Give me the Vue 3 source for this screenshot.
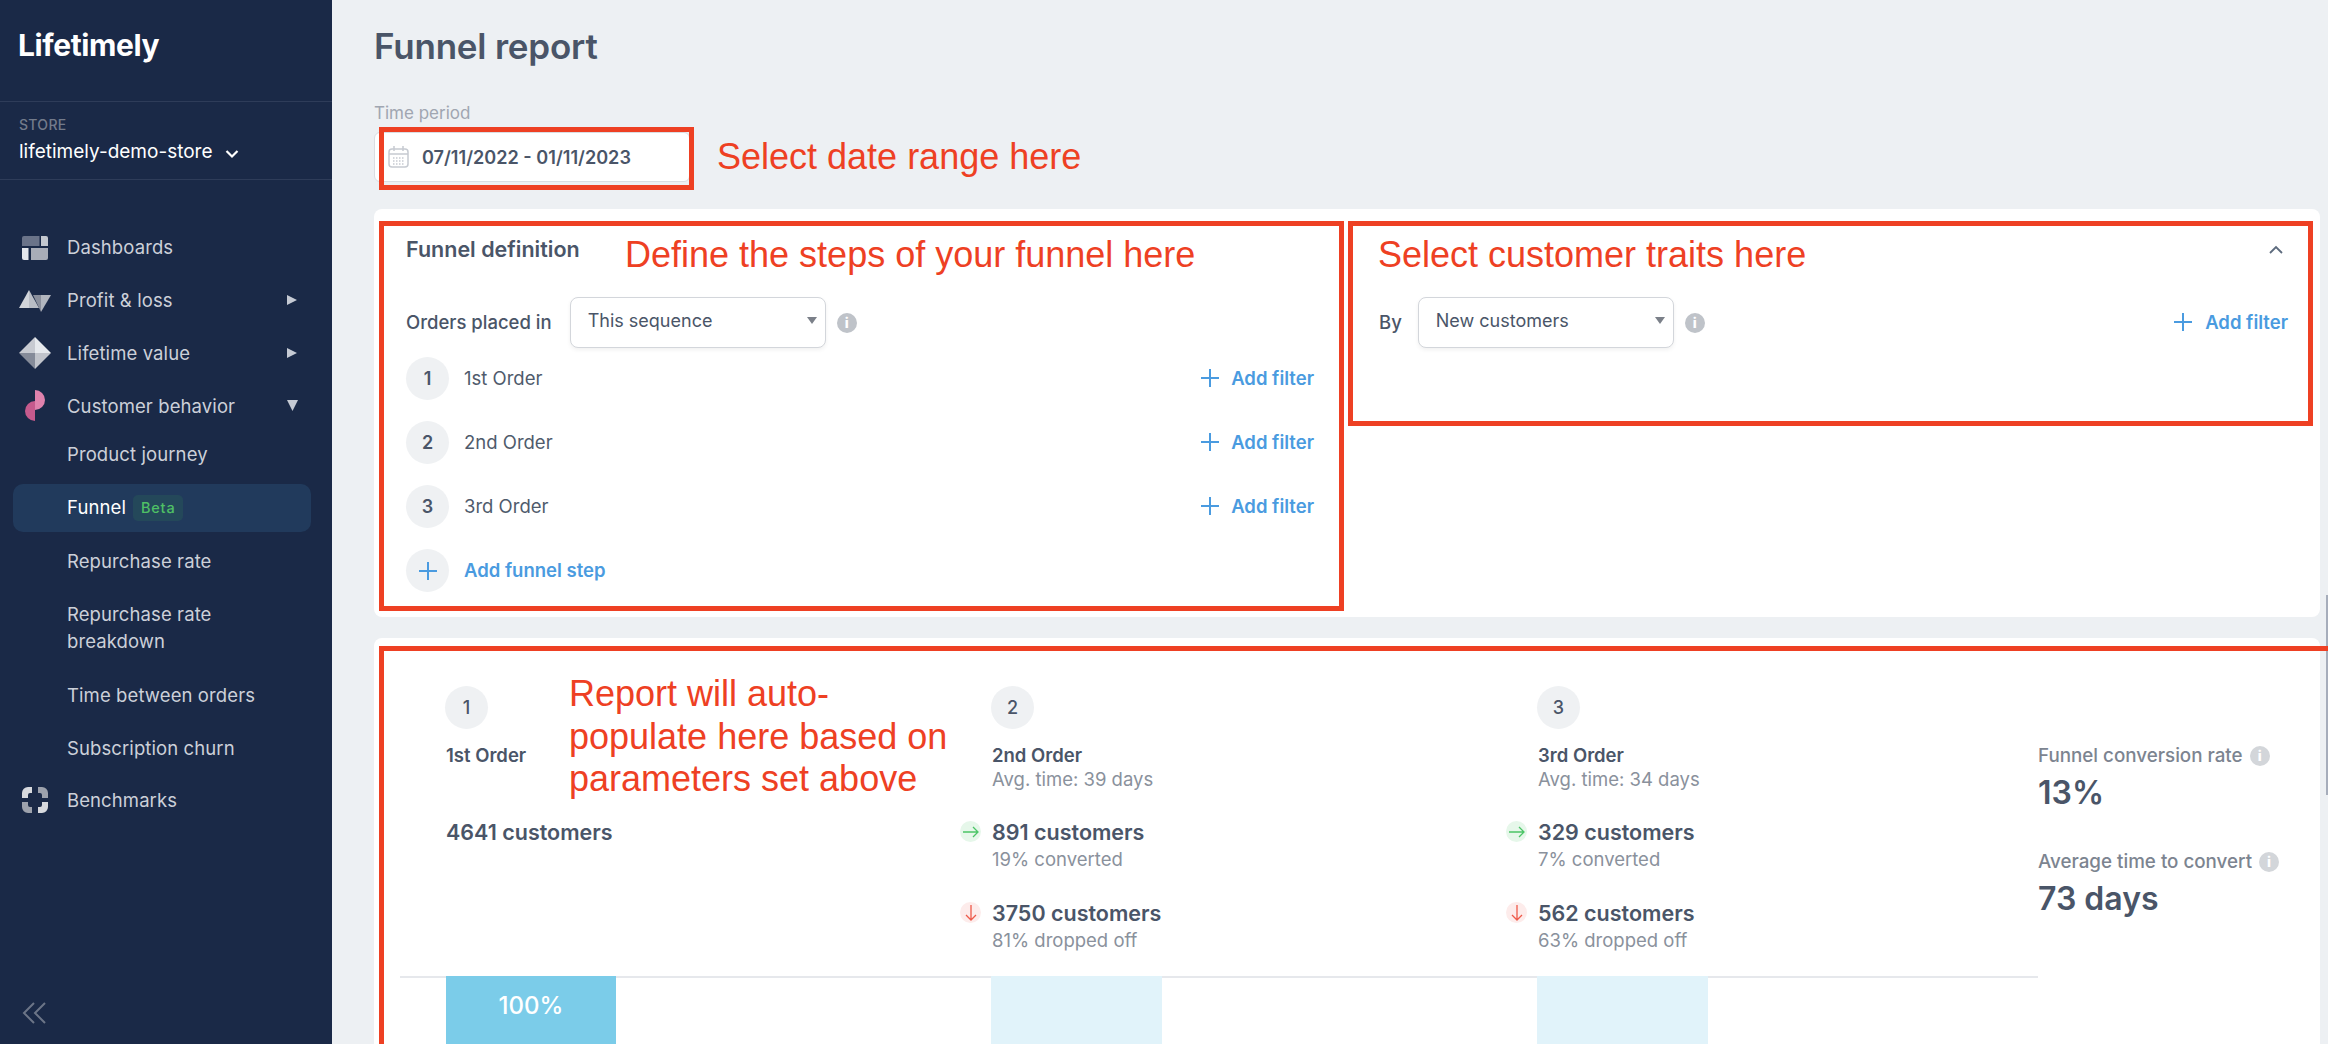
<script setup>
const navTop = [
  { label: 'Dashboards', icon: 'dash' },
  { label: 'Profit & loss', icon: 'profit', caret: 'right' },
  { label: 'Lifetime value', icon: 'ltv', caret: 'right' },
  { label: 'Customer behavior', icon: 'cust', caret: 'down' }
]
const navSub = [
  { label: 'Product journey' },
  { label: 'Funnel', active: true },
  { label: 'Repurchase rate' },
  { label: 'Repurchase rate breakdown' },
  { label: 'Time between orders' },
  { label: 'Subscription churn' }
]
const steps = [
  { n: 1, label: '1st Order' },
  { n: 2, label: '2nd Order' },
  { n: 3, label: '3rd Order' }
]
const report = [
  { n: 1, label: '1st Order', customers: '4641 customers', fill: true, text: '100%' },
  {
    n: 2, label: '2nd Order', avg: 'Avg. time: 39 days',
    conv: '891 customers', convSub: '19% converted',
    drop: '3750 customers', dropSub: '81% dropped off'
  },
  {
    n: 3, label: '3rd Order', avg: 'Avg. time: 34 days',
    conv: '329 customers', convSub: '7% converted',
    drop: '562 customers', dropSub: '63% dropped off', narrow: true
  }
]
</script>

<template>
  <div class="app">
    <aside class="side">
      <div class="logo">Lifetimely</div>
      <div class="store">
        <div class="store-label">STORE</div>
        <div class="store-name">
          lifetimely-demo-store
          <svg width="14" height="10" viewBox="0 0 14 10"><path d="M1.5 2l5.5 5.5L12.5 2" fill="none" stroke="#fff" stroke-width="2.2"/></svg>
        </div>
      </div>
      <nav class="nav">
        <div v-for="item in navTop" :key="item.label" class="nav-main">
          <span class="nav-icon">
            <svg v-if="item.icon === 'dash'" width="32" height="32" viewBox="0 0 32 32">
              <path d="M3 7a2 2 0 0 1 2-2h15.500v10H3z" fill="#6a7389"/>
              <path d="M22 5h5a2 2 0 0 1 2 2v8h-7z" fill="#c3c7cf"/>
              <path d="M3 17h6.500v12H5a2 2 0 0 1-2-2z" fill="#e4e7ec"/>
              <path d="M12 17h17v10a2 2 0 0 1-2 2H12z" fill="#a9adb8"/>
            </svg>
            <svg v-else-if="item.icon === 'profit'" width="32" height="32" viewBox="0 0 32 32">
              <path d="M14 11h8v17z" fill="#8a8f9c"/>
              <path d="M22 11h10L22 28z" fill="#b2b6bf"/>
              <path d="M10 6L0 24h10z" fill="#d2d5da"/>
              <path d="M10 6l10 18H10z" fill="#b9bdc5"/>
            </svg>
            <svg v-else-if="item.icon === 'ltv'" width="32" height="32" viewBox="0 0 32 32">
              <path d="M16 0L0 16h16z" fill="#c7cad1"/>
              <path d="M16 0l16 16H16z" fill="#e6e9ed"/>
              <path d="M0 16l16 16V16z" fill="#858b99"/>
              <path d="M32 16L16 32V16z" fill="#c1c4cb"/>
            </svg>
            <svg v-else width="32" height="32" viewBox="0 0 32 32">
              <path d="M16 0a10 10 0 0 1 0 20z" fill="#df82ad"/>
              <path d="M16 31a10 10 0 0 1 0-20z" fill="#c55a8d"/>
            </svg>
          </span>
          <span class="nav-text">{{ item.label }}</span>
          <svg v-if="item.caret === 'right'" class="caret" width="10" height="12" viewBox="0 0 10 12"><path d="M0 1l10 5-10 5z" fill="#c5cad4"/></svg>
          <svg v-if="item.caret === 'down'" class="caret caret-down" width="11" height="11" viewBox="0 0 11 11"><path d="M0 0h11L5.500 11z" fill="#c5cad4"/></svg>
        </div>
        <div class="nav-subs">
          <div v-for="s in navSub" :key="s.label" class="nav-sub" :class="{ active: s.active }">
            <span class="sub-text">{{ s.label }}</span>
            <span v-if="s.active" class="beta">Beta</span>
          </div>
        </div>
        <div class="nav-main bench">
          <span class="nav-icon">
            <svg width="32" height="32" viewBox="0 0 32 32">
              <path d="M3 14V9a6 6 0 0 1 6-6h4v6h-2a2 2 0 0 0-2 2v3z" fill="#d7d9de"/>
              <path d="M19 3h4a6 6 0 0 1 6 6v5h-6v-3a2 2 0 0 0-2-2h-2z" fill="#9da2ad"/>
              <path d="M3 18h6v3a2 2 0 0 0 2 2h2v6H9a6 6 0 0 1-6-6z" fill="#9da2ad"/>
              <path d="M23 18h6v5a6 6 0 0 1-6 6h-4v-6h2a2 2 0 0 0 2-2z" fill="#d7d9de"/>
            </svg>
          </span>
          <span class="nav-text">Benchmarks</span>
        </div>
      </nav>
      <div class="collapse">
        <svg width="24" height="22" viewBox="0 0 24 22"><path d="M12 1L2 11l10 10M23 1L13 11l10 10" fill="none" stroke="#6c7587" stroke-width="2"/></svg>
      </div>
    </aside>

    <main class="main">
      <h1 class="title">Funnel report</h1>
      <div class="field-label">Time period</div>
      <div class="date">
        <svg width="22" height="24" viewBox="0 0 22 24">
          <rect x="1" y="4" width="19" height="18" rx="3" fill="none" stroke="#c6cad1" stroke-width="1.500"/>
          <path d="M1 9h19M6 1v5M15 1v5" stroke="#c6cad1" stroke-width="1.500"/>
          <path d="M5 13h11M5 16h11M5 19h11" stroke="#c6cad1" stroke-width="1.500" stroke-dasharray="1.500 1.500"/>
        </svg>
        <span>07/11/2022 - 01/11/2023</span>
      </div>

      <section class="card def">
        <div class="def-left">
          <div class="def-title">Funnel definition</div>
          <div class="select-row seq-row">
            <span class="sel-label">Orders placed in</span>
            <div class="select">This sequence<i class="sel-arrow"></i></div>
            <span class="info">i</span>
          </div>
          <div v-for="s in steps" :key="s.n" class="step">
            <span class="circle">{{ s.n }}</span>
            <span class="step-label">{{ s.label }}</span>
            <span class="add">
              <svg width="18" height="18" viewBox="0 0 18 18"><path d="M9 0v18M0 9h18" stroke="#4a9be0" stroke-width="2"/></svg>
              Add filter
            </span>
          </div>
          <div class="step">
            <span class="circle">
              <svg width="18" height="18" viewBox="0 0 18 18"><path d="M9 0v18M0 9h18" stroke="#4a9be0" stroke-width="2"/></svg>
            </span>
            <span class="step-label link">Add funnel step</span>
          </div>
        </div>
        <div class="def-right">
          <div class="chev-row">
            <svg width="14" height="9" viewBox="0 0 14 9"><path d="M1 8l6-6 6 6" fill="none" stroke="#5d6b7e" stroke-width="1.800"/></svg>
          </div>
          <div class="select-row by-row">
            <span class="sel-label">By</span>
            <div class="select">New customers<i class="sel-arrow"></i></div>
            <span class="info">i</span>
            <span class="add add-end">
              <svg width="20" height="18" viewBox="0 0 20 18"><path d="M10 0v18M1 9h18" stroke="#4a9be0" stroke-width="2"/></svg>
              Add filter
            </span>
          </div>
        </div>
      </section>

      <section class="card rep">
        <div class="rep-grid">
          <div class="rep-cols">
            <div v-for="r in report" :key="r.n" class="col">
              <span class="circle">{{ r.n }}</span>
              <div class="col-label">{{ r.label }}</div>
              <div class="col-avg">{{ r.avg }}</div>
              <div v-if="r.customers" class="metric-title first">{{ r.customers }}</div>
              <template v-if="r.conv">
                <div class="metric first">
                  <span class="badge green">
                    <svg width="16" height="12" viewBox="0 0 16 12"><path d="M0 6h15M10 1l5 5-5 5" fill="none" stroke="#4bc566" stroke-width="1.300"/></svg>
                  </span>
                  <div class="metric-title">{{ r.conv }}</div>
                  <div class="metric-sub">{{ r.convSub }}</div>
                </div>
                <div class="metric second">
                  <span class="badge red">
                    <svg width="12" height="16" viewBox="0 0 12 16"><path d="M6 0v15M1 10l5 5 5-5" fill="none" stroke="#ee5a4a" stroke-width="1.300"/></svg>
                  </span>
                  <div class="metric-title">{{ r.drop }}</div>
                  <div class="metric-sub">{{ r.dropSub }}</div>
                </div>
              </template>
            </div>
          </div>
          <div class="bars">
            <div v-for="r in report" :key="r.n" class="bar-cell">
              <div class="bar" :class="{ fill: r.fill }">{{ r.text }}</div>
            </div>
          </div>
        </div>
        <div class="stats">
          <div class="stat-label">Funnel conversion rate <span class="info small">i</span></div>
          <div class="stat-value">13%</div>
          <div class="stat-label second-stat">Average time to convert <span class="info small">i</span></div>
          <div class="stat-value">73 days</div>
        </div>
      </section>

      <div class="thumb"></div>

      <div class="note-box box-date"></div>
      <div class="note-box box-def"></div>
      <div class="note-box box-traits"></div>
      <div class="note-box box-report"></div>
      <div class="note note-date">Select date range here</div>
      <div class="note note-def">Define the steps of your funnel here</div>
      <div class="note note-traits">Select customer traits here</div>
      <div class="note note-report">Report will auto-<br>populate here based on<br>parameters set above</div>
    </main>
  </div>
</template>

<style>
html, body { margin: 0; padding: 0; background: #edf0f3; overflow: hidden; }
</style>

<style scoped>
.app {
  display: flex;
  width: 2328px;
  height: 1044px;
  overflow: hidden;
  font-family: Inter, "Noto Sans", sans-serif;
  color: #4a5568;
  background: #edf0f3;
}

/* sidebar */
.side {
  width: 332px;
  flex: none;
  background: #1a2947;
  position: relative;
  color: #ccd0d9;
}
.logo {
  height: 101px;
  box-sizing: border-box;
  padding: 24px 0 0 18px;
  font-size: 30px;
  line-height: 42px;
  font-weight: 700;
  letter-spacing: -0.4px;
  color: #fff;
}
.store {
  height: 79px;
  box-sizing: border-box;
  border-top: 1px solid #2e3c59;
  border-bottom: 1px solid #2e3c59;
  padding: 14px 0 0 19px;
}
.store-label {
  font-size: 14px;
  line-height: 18px;
  font-weight: 500;
  letter-spacing: 0.3px;
  color: #737b8b;
}
.store-name {
  display: flex;
  align-items: center;
  gap: 12px;
  margin-top: 6px;
  font-size: 19px;
  line-height: 24px;
  color: #fff;
}
.store-name svg { margin-top: 4px; }
.nav { padding-top: 40px; }
.nav-main {
  display: flex;
  align-items: center;
  height: 53px;
  padding-left: 19px;
  position: relative;
}
.bench { margin-top: 0.500px; }
.nav-icon { width: 32px; height: 32px; margin-right: 16px; flex: none; display: flex; }
.nav-text { font-size: 18.500px; letter-spacing: 0.1px; color: #ccd0d9; }
.caret { position: absolute; left: 287px; top: 21px; }
.caret-down { left: 287px; }
.nav-subs {
  display: flex;
  flex-direction: column;
  gap: 5.500px;
  margin-top: -2px;
}
.nav-sub {
  display: flex;
  align-items: center;
  margin: 0 21px 0 13px;
  padding: 10.500px 40px 10.500px 54px;
  border-radius: 10px;
  font-size: 18.500px;
  line-height: 27px;
  letter-spacing: 0.1px;
  color: #ccd0d9;
}
.nav-sub.active { background: #213a5c; color: #fff; }
.beta {
  margin-left: 7px;
  padding: 0 8px;
  height: 26px;
  line-height: 26px;
  font-size: 14.500px;
  font-weight: 500;
  letter-spacing: 0.8px;
  color: #4fc065;
  background: #24485a;
  border-radius: 5px;
  flex: none;
}
.collapse { position: absolute; left: 22px; top: 1002px; }

/* main */
.main {
  flex: 1;
  position: relative;
  box-sizing: border-box;
  padding: 0 8px 0 42px;
}
.title {
  margin: 0;
  padding-top: 25px;
  font-size: 35px;
  line-height: 42px;
  font-weight: 600;
  letter-spacing: -0.2px;
  color: #4a5568;
}
.field-label {
  margin-top: 36px;
  font-size: 17px;
  line-height: 20px;
  color: #a0a6b1;
}
.date {
  display: flex;
  align-items: center;
  gap: 12px;
  width: 316px;
  height: 50px;
  margin-top: 9px;
  box-sizing: border-box;
  padding-left: 13px;
  background: #fff;
  border: 1px solid #dadde2;
  border-radius: 6px;
  font-size: 18.100px;
  font-weight: 600;
  color: #4a5568;
}
.card {
  background: #fff;
  border-radius: 8px;
}
.def {
  display: flex;
  height: 408px;
  margin-top: 27px;
}
.def-left { width: 940px; box-sizing: border-box; padding: 27px 0 0 32px; }
.def-right { flex: 1; padding: 35px 32px 0 65px; position: relative; }
.def-title {
  font-size: 21.500px;
  line-height: 26px;
  font-weight: 600;
  color: #4a5568;
}
.chev-row { position: absolute; right: 37px; top: 36px; display: flex; }
.select-row { display: flex; align-items: center; margin-top: 35px; }
.by-row { margin-top: 53px; }
.sel-label { font-size: 18.500px; font-weight: 500; color: #4a5568; margin-bottom: 2px; }
.select {
  position: relative;
  box-sizing: border-box;
  width: 256px;
  height: 51px;
  margin-left: 16px;
  padding: 0 0 4px 17px;
  display: flex;
  align-items: center;
  background: #fff;
  border: 1px solid #d3d6db;
  border-radius: 8px;
  box-shadow: 0 2px 4px rgba(0, 0, 0, 0.06);
  font-size: 18px;
  color: #4a5568;
}
.seq-row .select { margin-left: 18px; }
.sel-arrow {
  position: absolute;
  right: 8px;
  top: 19px;
  width: 0;
  height: 0;
  border-left: 5px solid transparent;
  border-right: 5px solid transparent;
  border-top: 7px solid #7b8089;
}
.info {
  width: 20px;
  height: 20px;
  margin-left: 11px;
  border-radius: 50%;
  background: #bfc3c9;
  color: #fff;
  font-size: 14px;
  font-weight: 800;
  line-height: 20px;
  text-align: center;
  flex: none;
}
.info.small { display: inline-block; margin-left: 2px; background: #d3d6da; vertical-align: 1px; }
.step {
  display: flex;
  align-items: center;
  height: 43px;
  margin-top: 21px;
}
.select-row + .step { margin-top: 9px; }
.circle {
  width: 43px;
  height: 43px;
  border-radius: 50%;
  background: #eff1f3;
  display: flex;
  align-items: center;
  justify-content: center;
  font-size: 18px;
  font-weight: 600;
  color: #4a5568;
  flex: none;
}
.step-label { margin-left: 15px; margin-bottom: 2px; font-size: 18.500px; color: #4f5b6c; }
.step-label.link { color: #4a9be0; font-weight: 600; }
.add {
  margin-left: auto;
  margin-bottom: 2px;
  display: flex;
  align-items: center;
  gap: 12px;
  font-size: 18.500px;
  font-weight: 600;
  color: #4a9be0;
}

/* report */
.rep {
  display: flex;
  height: 420px;
  margin-top: 21px;
  position: relative;
}
.rep-grid {
  width: 1638px;
  margin-left: 26px;
  flex: none;
  position: relative;
}
.rep-cols {
  display: grid;
  grid-template-columns: 546px 546px 1fr;
  height: 340px;
  padding-left: 46px;
  padding-top: 48px;
  box-sizing: border-box;
  border-bottom: 2px solid #e6e8ec;
}
.col { position: relative; }
.col .circle { margin-left: -1px; font-weight: 500; }
.col-label {
  margin-top: 14px;
  font-size: 18.500px;
  line-height: 24px;
  font-weight: 600;
  color: #4a5568;
}
.col-avg {
  height: 24px;
  font-size: 18.500px;
  line-height: 24px;
  color: #8a919c;
}
.metric-title {
  font-size: 21.500px;
  line-height: 28px;
  font-weight: 600;
  color: #4a5568;
}
.metric-title.first { margin-top: 27px; }
.metric { position: relative; }
.metric.first { margin-top: 27px; }
.metric.second { margin-top: 27px; }
.metric-sub {
  font-size: 18.500px;
  line-height: 26px;
  color: #8a919c;
}
.badge {
  position: absolute;
  left: -32px;
  top: 3px;
  width: 21px;
  height: 21px;
  border-radius: 50%;
  display: flex;
  align-items: center;
  justify-content: center;
}
.badge.green { background: #e6f7ea; }
.badge.red { background: #fdeceb; }
.metric.second .badge { top: 3px; }
.bars {
  display: grid;
  grid-template-columns: 545px 546px 1fr;
  padding-left: 46px;
  margin-top: -2px;
}
.bar-cell { display: flex; }
.bar {
  width: 171px;
  height: 70px;
  background: #e1f3fa;
  color: #fff;
  font-size: 24px;
  font-weight: 500;
  text-align: center;
  line-height: 60px;
}
.bar.fill { background: #7bcce9; width: 170px; }
.stats { padding-top: 106px; }
.stat-label {
  font-size: 18.800px;
  line-height: 24px;
  font-weight: 500;
  color: #7c8490;
  white-space: nowrap;
}
.stat-value {
  margin-top: 5px;
  font-size: 32px;
  line-height: 40px;
  font-weight: 600;
  color: #4a5568;
}
.second-stat { margin-top: 36.500px; }

/* annotations laid over the page */
.thumb {
  position: absolute;
  right: 0;
  top: 595px;
  width: 2px;
  height: 200px;
  background: #a6adbb;
}
.note-box {
  position: absolute;
  box-sizing: border-box;
  border: 5px solid #ee4023;
}
.box-date { left: 47px; top: 127px; width: 315px; height: 63px; }
.box-def { left: 47px; top: 221px; width: 965px; height: 390px; }
.box-traits { left: 1016px; top: 221px; width: 965px; height: 205px; }
.box-report { left: 47px; top: 646px; width: 1960px; height: 420px; }
.note {
  position: absolute;
  font-family: "Liberation Sans", Arial, sans-serif;
  font-size: 36px;
  line-height: 42.500px;
  color: #ee4023;
  white-space: nowrap;
}
.note-date { left: 385px; top: 136px; }
.note-def { left: 293px; top: 234px; }
.note-traits { left: 1046px; top: 234px; }
.note-report { left: 237px; top: 673px; }
</style>
